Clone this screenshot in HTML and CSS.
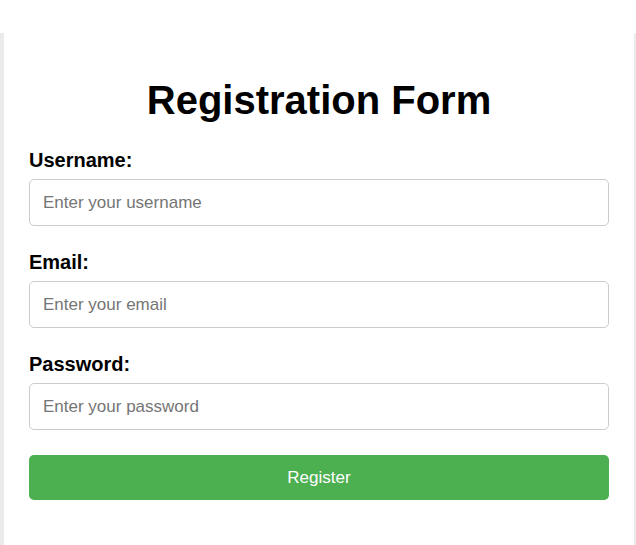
FILE: index.html
```html
<!DOCTYPE html>
<html lang="en">

<head>
  <meta charset="UTF-8">
  <meta name="viewport" content="width=device-width, initial-scale=1.0">
  <title>Registration</title>
  <link rel="stylesheet" href="styles.css">
</head>

<body>
  <div class="container">
    <div class="form-container">
      <h1>Registration Form</h1>

      <form id="registerForm">
        <label for="username">Username:</label>
        <input type="text" id="username" placeholder="Enter your username" required>

        <label for="email">Email:</label>
        <input type="email" id="email" placeholder="Enter your email" required>

        <label for="password">Password:</label>
        <input type="password" id="password" placeholder="Enter your password" required>

        <button type="submit">Register</button>
      </form>
    </div>
  </div>
</body>

</html>
```

FILE: styles.css
```css
body {
  font-family: "Liberation Sans", Arial, sans-serif;
  margin: 0;
  padding: 0;
  background-color: #fff;
}

.container {
  padding-top: 33px;
}

.form-container {
  min-height: 512px;
  padding: 0 25px;
  background-color: #fff;
  border-left: 4px solid #ebebeb;
  border-right: 2px solid #ebebeb;
  box-sizing: border-box;
}

h1 {
  margin: 0;
  padding-top: 44px;
  margin-bottom: 26px;
  text-align: center;
  font-size: 40px;
  line-height: 46px;
  color: #000;
}

label {
  display: block;
  margin-bottom: 7px;
  font-size: 20px;
  font-weight: bold;
  line-height: 23px;
  color: #000;
}

input {
  display: block;
  width: 100%;
  height: 47px;
  padding: 0 13px;
  margin-bottom: 25px;
  border: 1px solid #ccc;
  border-radius: 5px;
  font-family: inherit;
  font-size: 17px;
  box-sizing: border-box;
}

input::placeholder {
  color: #757575;
}

button {
  display: block;
  width: 100%;
  height: 45px;
  margin-top: 0;
  background-color: #4caf50;
  color: #fff;
  border: none;
  border-radius: 5px;
  font-family: inherit;
  font-size: 17px;
  cursor: pointer;
}

button:hover {
  background-color: #45a049;
}
```
